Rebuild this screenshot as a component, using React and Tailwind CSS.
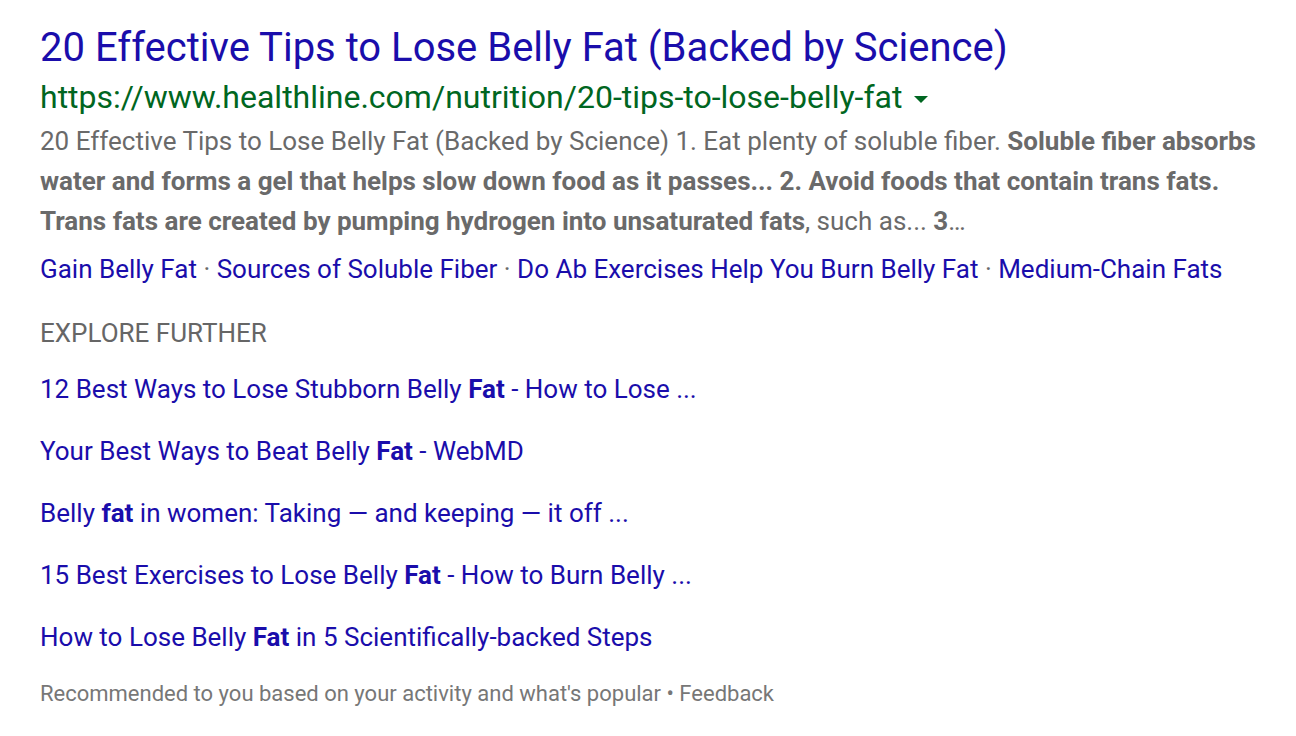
const related = [
  { pre: '12 Best Ways to Lose Stubborn Belly ', bold: 'Fat', post: ' - How to Lose ...' },
  { pre: 'Your Best Ways to Beat Belly ', bold: 'Fat', post: ' - WebMD' },
  { pre: 'Belly ', bold: 'fat', post: ' in women: Taking — and keeping — it off ...' },
  { pre: '15 Best Exercises to Lose Belly ', bold: 'Fat', post: ' - How to Burn Belly ...' },
  { pre: 'How to Lose Belly ', bold: 'Fat', post: ' in 5 Scientifically-backed Steps' },
];

const sitelinks = ['Gain Belly Fat', 'Sources of Soluble Fiber', 'Do Ab Exercises Help You Burn Belly Fat', 'Medium-Chain Fats'];

const App = () => {
  return (
    <div className="min-h-screen bg-white pl-10 pt-[24px] font-['Roboto',sans-serif]">
      {/* Result title */}
      <a href="#" className="block text-[40px] leading-[48px] text-[#1a0dab]">
        20 Effective Tips to Lose Belly Fat (Backed by Science)
      </a>
      <div className="mt-[5px] flex items-center text-[32px] leading-[40px] text-[#006621]">
        <span>https://www.healthline.com/nutrition/20-tips-to-lose-belly-fat</span>
        <span className="ml-3 mt-1 inline-block border-x-[7px] border-t-[7px] border-x-transparent border-t-[#006621]" />
      </div>

      {/* Snippet */}
      <p className="mt-[4px] w-[1230px] text-[26px] leading-[40px] text-[#6a6a6a]">
        20 Effective Tips to Lose Belly Fat (Backed by Science) 1. Eat plenty of soluble fiber.{' '}
        <b>Soluble fiber absorbs water and forms a gel that helps slow down food as it passes... 2. Avoid foods that contain trans fats. Trans fats are created by pumping hydrogen into unsaturated fats</b>
        , such as... <b>3</b>…
      </p>

      <div className="mt-[8px] text-[26px] leading-[40px] text-[#1a0dab]">
        {sitelinks.map((s, i) => (
          <span key={s}>
            {i > 0 && <span className="text-[#6a6a6a]"> · </span>}
            <a href="#">{s}</a>
          </span>
        ))}
      </div>

      {/* Explore further */}
      <div className="mt-[24px] text-[26px] leading-[40px] text-[#666]">EXPLORE FURTHER</div>
      <div className="mt-[16px] flex flex-col gap-[22px]">
        {related.map((r) => (
          <a key={r.pre} href="#" className="text-[26px] leading-[40px] text-[#1a0dab]">
            {r.pre}<b>{r.bold}</b>{r.post}
          </a>
        ))}
      </div>

      <div className="mt-[21px] text-[22px] leading-[32px] text-[#777]">
        Recommended to you based on your activity and what's popular • Feedback
      </div>
    </div>
  );
};

export default App;
